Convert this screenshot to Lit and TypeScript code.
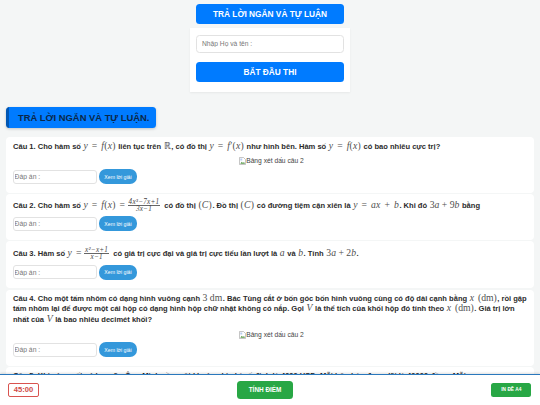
import { LitElement, html, css } from "lit";
import { customElement } from "lit/decorators.js";

const m = (s: unknown) => html`<span class="m">${s}</span>`;
const t = (s: unknown) => html`<span class="m t">${s}</span>`;
const frac = (a: unknown, b: unknown) =>
  html`<span class="frac"><span class="n">${a}</span><span class="d">${b}</span></span>`;
const yfx = m(html`<i>y</i> = <i>f</i>(<i>x</i>)`);
const xdm = html`<span class="m xd"><i>x</i> (dm)</span>`;
const broken = html`<div class="pic">
  <svg width="7" height="8" viewBox="0 0 14 16">
    <path d="M1 1h8l4 4v10H1z" fill="#fff" stroke="#a0a0a0" stroke-width="1.2" />
    <path d="M2.5 13.5l3-4 2.5 2.5 2-2 2 3.5z" fill="#5a9a4a" />
    <path d="M2.5 3h4v4h-4z" fill="#b8cdf0" />
  </svg><span>Bảng xét dấu câu 2</span>
</div>`;
const answer = html`<div class="ans">
  <input class="field" placeholder="Đáp án :" />
  <button class="see">Xem lời giải</button>
</div>`;

@customElement("app-root")
export class AppRoot extends LitElement {
  static styles = css`
    :host {
      display: block;
      position: relative;
      height: 405px;
      overflow: hidden;
      background: #f4f6f6;
      font-family: "Liberation Sans", Arial, sans-serif;
      color: #222;
    }
    .top { display: flex; flex-direction: column; align-items: center; padding-top: 4px; }
    .blue {
      width: 148px; height: 20px; background: #007bff; color: #fff; border: 0;
      border-radius: 3.5px; font: bold 8.3px "Liberation Sans", sans-serif;
      display: flex; align-items: center; justify-content: center; padding: 0;
    }
    .panel {
      margin-top: 4px; width: 160px; height: 64px; box-sizing: border-box; background: #fff;
      padding: 6.5px 6px; display: flex; flex-direction: column; gap: 8.8px;
      box-shadow: 0 1px 2px rgba(0, 0, 0, 0.06);
    }
    .name {
      height: 18.5px; box-sizing: border-box; border: 1px solid #e2e2e2; border-radius: 3.5px; flex: none;
      font: 6.7px "Liberation Sans", sans-serif; padding: 0 5px; outline: none; width: 100%; background: #fff; margin: 0;
    }
    .name::placeholder, .field::placeholder { color: #777; }
    .head {
      margin: 15px 0 0 6px; width: 150px; height: 21px; box-sizing: border-box; background: #007bff;
      border-left: 3px solid #0056b3; border-radius: 3.5px; color: #0b2748; font: bold 9.4px "Liberation Sans", sans-serif;
      display: flex; align-items: center; padding-left: 9px; box-shadow: 0 1px 3px rgba(0, 0, 0, 0.2);
    }
    .list { margin: 9px 6px 0; display: flex; flex-direction: column; gap: 1.5px; }
    .card {
      background: #fff; border-radius: 4px; padding: 4.5px 4px 8.5px 7px; font: bold 7.55px/10.8px "Liberation Sans", sans-serif;
      color: #2b2b2b; box-sizing: border-box; display: flex; flex-direction: column;
    }
    .q { display: block; }
    .m { font: 9.7px/0 "Liberation Serif", serif; color: #4f4f4f; padding: 0 0.5px; word-spacing: 1.2px; letter-spacing: 0.2px; }
    .m.t { word-spacing: 0; letter-spacing: 0; }
    .m.xd { word-spacing: 1.5px; letter-spacing: 0; }
    .m i { font-style: italic; }
    .frac {
      display: inline-flex; flex-direction: column; align-items: center; vertical-align: middle;
      font: italic 7.2px/6.6px "Liberation Serif", serif; color: #444; margin: 0 2px; letter-spacing: 0.2px;
    }
    .frac .n { border-bottom: 0.6px solid #666; padding: 0 1px; }
    .pic {
      display: flex; justify-content: center; align-items: center; font: 6.7px/8px "Liberation Sans", sans-serif;
      color: #444; margin-top: 5px; height: 8px;
    }
    .ans { display: flex; align-items: center; gap: 2.5px; margin-top: auto; margin-left: -0.5px; }
    .field {
      width: 84px; height: 14px; box-sizing: border-box; border: 1px solid #e2e2e2; border-radius: 3px;
      font: 6.8px "Liberation Sans", sans-serif; padding: 0 1px; outline: none; background: #fff; margin: 0;
    }
    .see {
      width: 38px; height: 15px; border: 0; border-radius: 7px; background: #3498db; color: #fff;
      font: 5.2px "Liberation Sans", sans-serif; padding: 0;
    }
    .c1 { height: 55.5px; }
    .c2 { height: 45.5px; }
    .c3 { height: 47px; padding-top: 5.5px; }
    .c4 { height: 76px; padding-top: 4px; }
    .c5 { height: 60px; padding-top: 4px; }
    .foot {
      position: absolute; left: 0; right: 0; bottom: 0; height: 31.5px; box-sizing: border-box; background: #fff;
      border-top: 1px solid #2a78bd; box-shadow: 0 -1px 2px rgba(0, 0, 0, 0.12);
      display: flex; align-items: center; justify-content: space-between; padding: 0 8.7px 0 8.3px;
    }
    .timer {
      width: 30.5px; height: 13.5px; box-sizing: border-box; border: 1px solid #d9534f; border-radius: 2px; color: #cf4b47;
      font: bold 7.6px "Liberation Sans", sans-serif; display: flex; align-items: center; justify-content: center;
    }
    .calc {
      width: 55.5px; height: 17.5px; border: 0; border-radius: 3.5px; background: #28a745;
      color: #fff; font: bold 6.4px "Liberation Sans", sans-serif; padding: 0;
    }
    .print {
      width: 40px; height: 14.5px; border: 0; border-radius: 2.5px; background: #28a745; color: #fff;
      font: bold 4.8px "Liberation Sans", sans-serif; padding: 0;
    }
  `;

  render() {
    return html`
      <section class="top">
        <div class="blue">TRẢ LỜI NGẮN VÀ TỰ LUẬN</div>
        <div class="panel">
          <input class="name" placeholder="Nhập Họ và tên :" />
          <button class="blue">BẮT ĐẦU THI</button>
        </div>
      </section>
      <h2 class="head">TRẢ LỜI NGẮN VÀ TỰ LUẬN.</h2>
      <div class="list">
        <article class="card c1">
          <div class="q">Câu 1. Cho hàm số ${yfx} liên tục trên ${m("ℝ")}, có đồ thị ${m(html`<i>y</i> = <i>f</i>′(<i>x</i>)`)} như hình bên. Hàm số ${yfx} có bao nhiêu cực trị?</div>
          ${broken}${answer}
        </article>
        <article class="card c2">
          <div class="q">Câu 2. Cho hàm số ${m(html`<i>y</i> = <i>f</i>(<i>x</i>) =`)}${frac("4x³−7x+1", "3x−1")} có đồ thị ${m(html`(<i>C</i>)`)}. Đồ thị ${m(html`(<i>C</i>)`)} có đường tiệm cận xiên là ${m(html`<i>y</i> = <i>ax</i> + <i>b</i>`)}. Khi đó ${t(html`3<i>a</i> + 9<i>b</i>`)} bằng</div>
          ${answer}
        </article>
        <article class="card c3">
          <div class="q">Câu 3. Hàm số ${m(html`<i>y</i> =`)}${frac("x²−x+1", "x−1")} có giá trị cực đại và giá trị cực tiểu lần lượt là ${t(html`<i>a</i>`)} và ${t(html`<i>b</i>`)}. Tính ${t(html`3<i>a</i> + 2<i>b</i>`)}.</div>
          ${answer}
        </article>
        <article class="card c4">
          <div class="q">Câu 4. Cho một tấm nhôm có dạng hình vuông cạnh ${t("3 dm")}. Bác Tùng cắt ở bốn góc bốn hình vuông cùng có độ dài cạnh bằng ${xdm}, rồi gập tấm nhôm lại để được một cái hộp có dạng hình hộp chữ nhật không có nắp. Gọi ${t(html`<i>V</i>`)} là thể tích của khối hộp đó tính theo ${xdm}. Giá trị lớn nhất của ${t(html`<i>V</i>`)} là bao nhiêu decimét khối?</div>
          ${broken}${answer}
        </article>
        <article class="card c5">
          <div class="q">Câu 5. Khi sản xuất vỏ lon sữa Ông Minh cần một khoản chi phí cố định là 4000 USD. Mỗi hộp bán được lãi là 40000 đồng. Mỗi</div>
        </article>
      </div>
      <footer class="foot">
        <div class="timer">45:00</div>
        <button class="calc">TÍNH ĐIỂM</button>
        <button class="print">IN ĐỀ A4</button>
      </footer>
    `;
  }
}
